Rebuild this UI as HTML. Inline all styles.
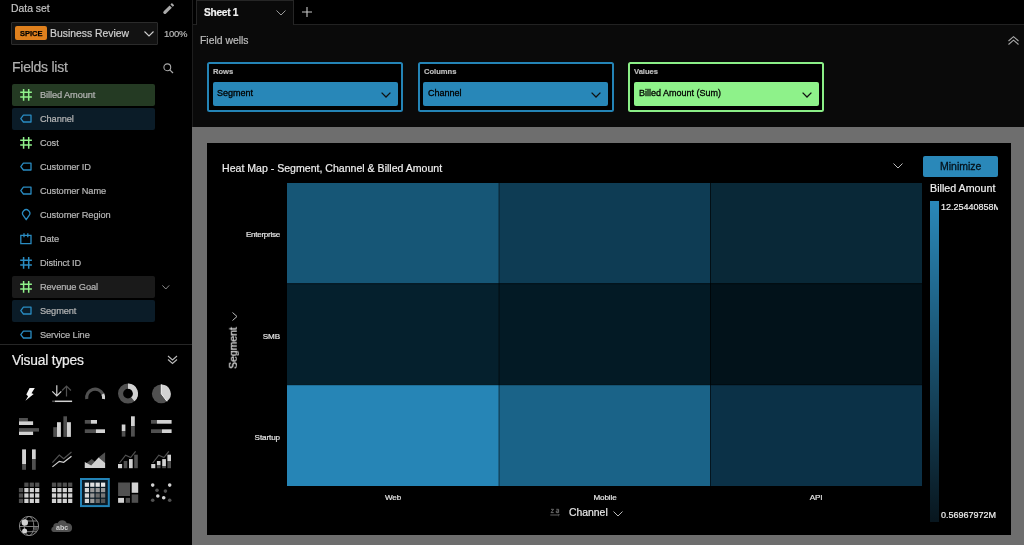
<!DOCTYPE html>
<html><head><meta charset="utf-8">
<style>
*{box-sizing:border-box;margin:0;padding:0}
html,body{width:1024px;height:545px;overflow:hidden;background:#000;font-family:"Liberation Sans",sans-serif}
.a{position:absolute}
.t{position:absolute;white-space:nowrap;line-height:1;will-change:transform;-webkit-text-stroke:0.2px currentColor}
svg{position:absolute;overflow:visible}
</style></head><body>
<!-- SIDEBAR -->
<div class="a" id="side" style="left:0;top:0;width:192px;height:545px;background:#000">
  <div class="t" style="left:11px;top:4.2px;font-size:10.4px;color:#c4c4c4">Data set</div>
  <!-- pencil -->
  <svg style="left:0;top:0" width="192" height="20" viewBox="0 0 192 20"><g transform="translate(164.05 13.2) rotate(-45)"><path d="M1.2 -1.65 H9.4 V1.65 H1.2 A1.65 1.65 0 0 1 1.2 -1.65 Z" fill="#a9a9a9"/><rect x="10.6" y="-1.65" width="2.1" height="3.3" rx="0.4" fill="#a9a9a9"/></g></svg>
  <div class="a" style="left:11px;top:22px;width:147px;height:23px;background:#121212;border:1px solid #2b2b2b;border-radius:1px"></div>
  <div class="a" style="left:15px;top:26px;width:32px;height:14px;background:#df801d;border-radius:2px"></div>
  <div class="t" style="left:19.5px;top:30px;font-size:7.5px;font-weight:700;color:#000;-webkit-text-stroke:0.25px #000">SPICE</div>
  <div class="t" style="left:50px;top:29px;font-size:10.4px;color:#cfcfcf">Business Review</div>
  <svg style="left:144px;top:31px" width="10" height="6" viewBox="0 0 10 6"><path d="M0.5 0.5 L5 5 L9.5 0.5" stroke="#cfcfcf" stroke-width="1.1" fill="none"/></svg>
  <div class="t" style="left:164.3px;top:29.2px;font-size:9.5px;letter-spacing:-0.3px;color:#b8b8b8">100%</div>

  <div class="t" style="left:11.9px;top:60.3px;font-size:14px;letter-spacing:-0.25px;color:#b0b0b0">Fields list</div>
  <svg style="left:163px;top:63px" width="11" height="11" viewBox="0 0 11 11"><circle cx="4.3" cy="4.3" r="3.4" stroke="#aaa" stroke-width="1.1" fill="none"/><path d="M6.8 6.8 L10 10" stroke="#aaa" stroke-width="1.2"/></svg>
  <div class="a" style="left:12px;top:84px;width:143px;height:22px;background:#243a23;border-radius:2px"></div>
<svg style="left:20px;top:89px" width="12" height="12" viewBox="0 0 12 12"><path d="M3.6 0 V11.7 M8.7 0 V11.7 M0.2 3.3 H11.9 M0.2 7.9 H11.9" stroke="#90f28b" stroke-width="1.5" fill="none"/></svg>
<div class="t" style="left:39.6px;top:90.5px;font-size:9.25px;letter-spacing:-0.1px;color:#b6b6b6">Billed Amount</div>
<div class="a" style="left:12px;top:108px;width:143px;height:22px;background:#0b1c28;border-radius:2px"></div>
<svg style="left:20px;top:113px" width="12" height="12" viewBox="0 0 12 12"><path d="M3.4 2.2 H11 V9 H3.4 L0.8 5.6 Z" stroke="#2a8cc2" stroke-width="1.3" fill="none" stroke-linejoin="round"/></svg>
<div class="t" style="left:39.6px;top:114.5px;font-size:9.25px;letter-spacing:-0.1px;color:#b6b6b6">Channel</div>
<svg style="left:20px;top:137px" width="12" height="12" viewBox="0 0 12 12"><path d="M3.6 0 V11.7 M8.7 0 V11.7 M0.2 3.3 H11.9 M0.2 7.9 H11.9" stroke="#90f28b" stroke-width="1.5" fill="none"/></svg>
<div class="t" style="left:39.6px;top:138.5px;font-size:9.25px;letter-spacing:-0.1px;color:#b6b6b6">Cost</div>
<svg style="left:20px;top:161px" width="12" height="12" viewBox="0 0 12 12"><path d="M3.4 2.2 H11 V9 H3.4 L0.8 5.6 Z" stroke="#2a8cc2" stroke-width="1.3" fill="none" stroke-linejoin="round"/></svg>
<div class="t" style="left:39.6px;top:162.5px;font-size:9.25px;letter-spacing:-0.1px;color:#b6b6b6">Customer ID</div>
<svg style="left:20px;top:185px" width="12" height="12" viewBox="0 0 12 12"><path d="M3.4 2.2 H11 V9 H3.4 L0.8 5.6 Z" stroke="#2a8cc2" stroke-width="1.3" fill="none" stroke-linejoin="round"/></svg>
<div class="t" style="left:39.6px;top:186.5px;font-size:9.25px;letter-spacing:-0.1px;color:#b6b6b6">Customer Name</div>
<svg style="left:20px;top:209px" width="12" height="12" viewBox="0 0 12 12"><path d="M6.2 10.7 L3.4 6.6 A3.62 3.62 0 1 1 9 6.6 Z" stroke="#2a8cc2" stroke-width="1.3" fill="none" stroke-linejoin="round"/></svg>
<div class="t" style="left:39.6px;top:210.5px;font-size:9.25px;letter-spacing:-0.1px;color:#b6b6b6">Customer Region</div>
<svg style="left:20px;top:233px" width="12" height="12" viewBox="0 0 12 12"><path d="M0.8 2.3 H11 V10.6 H0.8 Z M4 0.2 V4.2 M7.8 0.2 V4.2" stroke="#2a8cc2" stroke-width="1.3" fill="none"/></svg>
<div class="t" style="left:39.6px;top:234.5px;font-size:9.25px;letter-spacing:-0.1px;color:#b6b6b6">Date</div>
<svg style="left:20px;top:257px" width="12" height="12" viewBox="0 0 12 12"><path d="M3.6 0 V11.7 M8.7 0 V11.7 M0.2 3.3 H11.9 M0.2 7.9 H11.9" stroke="#2a8cc2" stroke-width="1.5" fill="none"/></svg>
<div class="t" style="left:39.6px;top:258.5px;font-size:9.25px;letter-spacing:-0.1px;color:#b6b6b6">Distinct ID</div>
<div class="a" style="left:12px;top:276px;width:143px;height:22px;background:#1a1a1a;border-radius:2px"></div>
<svg style="left:20px;top:281px" width="12" height="12" viewBox="0 0 12 12"><path d="M3.6 0 V11.7 M8.7 0 V11.7 M0.2 3.3 H11.9 M0.2 7.9 H11.9" stroke="#90f28b" stroke-width="1.5" fill="none"/></svg>
<div class="t" style="left:39.6px;top:282.5px;font-size:9.25px;letter-spacing:-0.1px;color:#b6b6b6">Revenue Goal</div>
<div class="a" style="left:12px;top:300px;width:143px;height:22px;background:#0b1c28;border-radius:2px"></div>
<svg style="left:20px;top:305px" width="12" height="12" viewBox="0 0 12 12"><path d="M3.4 2.2 H11 V9 H3.4 L0.8 5.6 Z" stroke="#2a8cc2" stroke-width="1.3" fill="none" stroke-linejoin="round"/></svg>
<div class="t" style="left:39.6px;top:306.5px;font-size:9.25px;letter-spacing:-0.1px;color:#b6b6b6">Segment</div>
<svg style="left:20px;top:329px" width="12" height="12" viewBox="0 0 12 12"><path d="M3.4 2.2 H11 V9 H3.4 L0.8 5.6 Z" stroke="#2a8cc2" stroke-width="1.3" fill="none" stroke-linejoin="round"/></svg>
<div class="t" style="left:39.6px;top:330.5px;font-size:9.25px;letter-spacing:-0.1px;color:#b6b6b6">Service Line</div>
<svg style="left:162px;top:284.8px" width="8" height="5" viewBox="0 0 8 5"><path d="M0.4 0.4 L3.8 4 L7.2 0.4" stroke="#9a9a9a" stroke-width="0.9" fill="none"/></svg>

  <div class="a" style="left:0;top:344px;width:192px;height:1px;background:#262626"></div>
  <div class="t" style="left:12.1px;top:354.2px;font-size:13.8px;letter-spacing:-0.2px;color:#ececec">Visual types</div>
  <svg style="left:167px;top:355px" width="11" height="10" viewBox="0 0 11 10"><path d="M1 1 L5.5 5 L10 1 M1 4.5 L5.5 8.5 L10 4.5" stroke="#bbb" stroke-width="1.1" fill="none"/></svg>
  <svg style="left:0;top:0" width="192" height="545" viewBox="0 0 192 545"><path d="M29.6 388 L34.8 388 L31.5 393.3 L33.7 394.1 L25.4 400.8 L28.1 396.2 L26.3 394.5 Z" fill="#f4f4f4"/><path d="M56.8 385.2 V396 M52.3 391.3 L56.8 395.9 L61.3 391.3" stroke="#d2d2d2" stroke-width="1.2" fill="none"/><path d="M66.5 396.4 V385.8 M62.1 390.5 L66.5 386 L70.9 390.5" stroke="#505050" stroke-width="1.2" fill="none"/><path d="M52.1 401.3 H55 " stroke="#505050" stroke-width="1.5"/><path d="M55 401.3 H72.1" stroke="#d2d2d2" stroke-width="1.5"/><path d="M86.73 399.08 A8.5 8.5 0 0 1 102.80 394.01" stroke="#505050" stroke-width="3.1" fill="none"/><path d="M102.80 394.01 A8.5 8.5 0 0 1 103.47 399.08" stroke="#d2d2d2" stroke-width="3.1" fill="none"/><circle cx="128" cy="393.6" r="7.45" stroke="#505050" stroke-width="5.1" fill="none"/><path d="M128.00 386.15 A7.45 7.45 0 0 1 132.79 399.31" stroke="#d2d2d2" stroke-width="5.1" fill="none"/><circle cx="161.3" cy="393.8" r="9.4" fill="#505050"/><path d="M161.3 393.8 L161.30 384.40 A9.4 9.4 0 0 1 166.96 401.31 Z" fill="#d2d2d2"/><path d="M161.30 384.40 L161.3 393.8 L166.96 401.31" stroke="#f4f4f4" stroke-width="1" fill="none"/><rect x="19" y="418" width="8.90" height="3.30" fill="#505050"/><rect x="19" y="421.3" width="14.10" height="3.70" fill="#d2d2d2"/><rect x="19" y="428.1" width="20.00" height="3.50" fill="#505050"/><rect x="19" y="431.6" width="14.10" height="3.40" fill="#d2d2d2"/><rect x="53.25" y="427.2" width="3.75" height="9.70" fill="#505050"/><rect x="57" y="422.2" width="3.90" height="14.70" fill="#d2d2d2"/><rect x="63.4" y="416.3" width="3.60" height="20.60" fill="#505050"/><rect x="67" y="422.2" width="3.90" height="14.70" fill="#d2d2d2"/><rect x="84.8" y="420" width="6.20" height="3.70" fill="#505050"/><rect x="91" y="420" width="6.00" height="3.70" fill="#d2d2d2"/><rect x="84.8" y="429.3" width="11.10" height="3.70" fill="#505050"/><rect x="95.9" y="429.3" width="9.10" height="3.70" fill="#d2d2d2"/><rect x="121.75" y="424.5" width="3.65" height="6.50" fill="#d2d2d2"/><rect x="121.75" y="431" width="3.65" height="5.60" fill="#505050"/><rect x="131" y="416.3" width="3.80" height="9.80" fill="#d2d2d2"/><rect x="131" y="426.1" width="3.80" height="10.50" fill="#505050"/><rect x="151" y="420" width="5.90" height="3.70" fill="#505050"/><rect x="156.9" y="420" width="14.70" height="3.70" fill="#d2d2d2"/><rect x="151" y="429.3" width="11.00" height="3.70" fill="#505050"/><rect x="162" y="429.3" width="9.60" height="3.70" fill="#d2d2d2"/><rect x="22.1" y="449.4" width="3.90" height="14.60" fill="#d2d2d2"/><rect x="22.1" y="464" width="3.90" height="5.80" fill="#505050"/><rect x="32" y="449.4" width="3.75" height="9.60" fill="#d2d2d2"/><rect x="32" y="459" width="3.75" height="10.80" fill="#505050"/><path d="M52.4 462.6 L59.3 455.1 L63.7 458.6 L71.5 452" stroke="#505050" stroke-width="1.2" fill="none"/><path d="M52.4 466.9 L59.3 461.4 L63.7 462.3 L71.5 456.25" stroke="#d2d2d2" stroke-width="1.2" fill="none"/><path d="M84.8 464.5 L91.7 459 L96 462.5 L98.5 457.6 L105.1 452.3 L105.1 467.9 L84.8 467.9 Z" fill="#505050"/><path d="M84.8 462 L91.2 465.4 L98.5 457.6 L105.1 463 L105.1 467.9 L84.8 467.9 Z" fill="#d2d2d2"/><rect x="118" y="464" width="4.10" height="4.20" fill="#d2d2d2"/><rect x="123.7" y="461" width="3.60" height="7.20" fill="#505050"/><rect x="129" y="459.1" width="3.70" height="9.10" fill="#d2d2d2"/><rect x="134.2" y="454.7" width="3.60" height="13.50" fill="#505050"/><path d="M119.5 463 L125.6 455.2 L130.7 457.6 L135.6 451.3" stroke="#505050" stroke-width="1.2" fill="none"/><rect x="151.2" y="464" width="4.10" height="4.20" fill="#d2d2d2"/><rect x="156.9" y="461" width="3.60" height="4.00" fill="#d2d2d2"/><rect x="156.9" y="465" width="3.60" height="3.20" fill="#505050"/><rect x="162.2" y="459.1" width="3.70" height="6.90" fill="#d2d2d2"/><rect x="162.2" y="466" width="3.70" height="2.20" fill="#505050"/><rect x="167.39999999999998" y="454.7" width="3.60" height="6.30" fill="#d2d2d2"/><rect x="167.39999999999998" y="461" width="3.60" height="7.20" fill="#505050"/><path d="M152.7 463 L158.8 455.2 L163.89999999999998 457.6 L168.8 451.3" stroke="#505050" stroke-width="1.2" fill="none"/><rect x="24.3" y="482.6" width="4.20" height="4.20" fill="#505050"/><rect x="29.7" y="482.6" width="4.20" height="4.20" fill="#505050"/><rect x="35.1" y="482.6" width="4.20" height="4.20" fill="#505050"/><rect x="18.9" y="488" width="4.20" height="4.20" fill="#505050"/><rect x="24.3" y="488" width="4.20" height="4.20" fill="#d2d2d2"/><rect x="29.7" y="488" width="4.20" height="4.20" fill="#d2d2d2"/><rect x="35.1" y="488" width="4.20" height="4.20" fill="#d2d2d2"/><rect x="18.9" y="493.4" width="4.20" height="4.20" fill="#505050"/><rect x="24.3" y="493.4" width="4.20" height="4.20" fill="#d2d2d2"/><rect x="29.7" y="493.4" width="4.20" height="4.20" fill="#d2d2d2"/><rect x="35.1" y="493.4" width="4.20" height="4.20" fill="#d2d2d2"/><rect x="18.9" y="498.8" width="4.20" height="4.20" fill="#505050"/><rect x="24.3" y="498.8" width="4.20" height="4.20" fill="#d2d2d2"/><rect x="29.7" y="498.8" width="4.20" height="4.20" fill="#d2d2d2"/><rect x="35.1" y="498.8" width="4.20" height="4.20" fill="#d2d2d2"/><rect x="51.9" y="482.6" width="4.20" height="4.20" fill="#505050"/><rect x="57.3" y="482.6" width="4.20" height="4.20" fill="#505050"/><rect x="62.7" y="482.6" width="4.20" height="4.20" fill="#505050"/><rect x="68.1" y="482.6" width="4.20" height="4.20" fill="#505050"/><rect x="51.9" y="488" width="4.20" height="4.20" fill="#d2d2d2"/><rect x="57.3" y="488" width="4.20" height="4.20" fill="#d2d2d2"/><rect x="62.7" y="488" width="4.20" height="4.20" fill="#d2d2d2"/><rect x="68.1" y="488" width="4.20" height="4.20" fill="#d2d2d2"/><rect x="51.9" y="493.4" width="4.20" height="4.20" fill="#d2d2d2"/><rect x="57.3" y="493.4" width="4.20" height="4.20" fill="#d2d2d2"/><rect x="62.7" y="493.4" width="4.20" height="4.20" fill="#d2d2d2"/><rect x="68.1" y="493.4" width="4.20" height="4.20" fill="#d2d2d2"/><rect x="51.9" y="498.8" width="4.20" height="4.20" fill="#d2d2d2"/><rect x="57.3" y="498.8" width="4.20" height="4.20" fill="#d2d2d2"/><rect x="62.7" y="498.8" width="4.20" height="4.20" fill="#d2d2d2"/><rect x="68.1" y="498.8" width="4.20" height="4.20" fill="#d2d2d2"/><rect x="81" y="479" width="27.8" height="27.1" fill="#0b1a24" stroke="#2384b8" stroke-width="2"/><rect x="84.8" y="482.6" width="4.20" height="4.20" fill="#e0e0e0"/><rect x="90.2" y="482.6" width="4.20" height="4.20" fill="#e0e0e0"/><rect x="95.6" y="482.6" width="4.20" height="4.20" fill="#e0e0e0"/><rect x="101" y="482.6" width="4.20" height="4.20" fill="#e6e6e6"/><rect x="84.8" y="488" width="4.20" height="4.20" fill="#d8d8d8"/><rect x="90.2" y="488" width="4.20" height="4.20" fill="#999"/><rect x="95.6" y="488" width="4.20" height="4.20" fill="#9a9a9a"/><rect x="101" y="488" width="4.20" height="4.20" fill="#999"/><rect x="84.8" y="493.4" width="4.20" height="4.20" fill="#d8d8d8"/><rect x="90.2" y="493.4" width="4.20" height="4.20" fill="#999"/><rect x="95.6" y="493.4" width="4.20" height="4.20" fill="#6a6a6a"/><rect x="101" y="493.4" width="4.20" height="4.20" fill="#777"/><rect x="84.8" y="498.8" width="4.20" height="4.20" fill="#d8d8d8"/><rect x="90.2" y="498.8" width="4.20" height="4.20" fill="#999"/><rect x="95.6" y="498.8" width="4.20" height="4.20" fill="#6a6a6a"/><rect x="101" y="498.8" width="4.20" height="4.20" fill="#555"/><rect x="118.1" y="482.5" width="11.90" height="13.50" fill="#505050"/><rect x="131.7" y="482.5" width="6.50" height="10.30" fill="#d2d2d2"/><rect x="118.1" y="497.9" width="5.90" height="4.90" fill="#d2d2d2"/><rect x="125.7" y="497.9" width="4.30" height="4.90" fill="#505050"/><rect x="131.7" y="494.4" width="6.50" height="8.40" fill="#505050"/><circle cx="152.7" cy="485.1" r="1.8" fill="#d2d2d2"/><circle cx="169.7" cy="485.1" r="1.8" fill="#d2d2d2"/><circle cx="157" cy="490.2" r="1.8" fill="#505050"/><circle cx="165.4" cy="491.1" r="1.8" fill="#505050"/><circle cx="157.8" cy="496" r="1.8" fill="#d2d2d2"/><circle cx="163.7" cy="497.8" r="1.8" fill="#d2d2d2"/><circle cx="152.7" cy="500.3" r="1.8" fill="#505050"/><circle cx="169.7" cy="500.3" r="1.8" fill="#505050"/><circle cx="29" cy="526" r="9.6" stroke="#8a8a8a" stroke-width="1" fill="none"/><path d="M19.6 526.5 H38.4 M21.2 521 H36.8 M21.2 531.7 H36.8" stroke="#8a8a8a" stroke-width="0.9" fill="none"/><ellipse cx="29" cy="526" rx="4.8" ry="9.6" stroke="#8a8a8a" stroke-width="0.9" fill="none"/><rect x="34" y="527" width="3.6" height="3.6" fill="#4a4a4a"/><circle cx="24.8" cy="522.5" r="3.2" fill="#d2d2d2"/><circle cx="24.6" cy="531" r="2.5" fill="#d2d2d2"/><path d="M53.5 531.9 A2.6 2.6 0 0 1 53.3 526.8 A3.4 3.4 0 0 1 57.6 523.2 A5 5 0 0 1 66.8 523.3 A4.3 4.3 0 0 1 72.1 528 A4 4 0 0 1 68.1 531.9 Z" fill="#505050"/><text x="62.1" y="529.8" text-anchor="middle" font-family="Liberation Sans" font-weight="700" font-size="7" fill="#d0d0d0">abc</text></svg>
</div>
<div class="a" style="left:192px;top:0;width:1px;height:127px;background:#1e1e1e"></div>

<!-- MAIN TOP -->
<div class="a" style="left:193px;top:0;width:831px;height:24px;background:#000"></div>
<div class="a" style="left:193px;top:24px;width:831px;height:103px;background:#0a0a0a;border-top:1px solid #222"></div>
<div class="a" style="left:196px;top:0;width:98px;height:25px;background:#0a0a0a;border:1px solid #262626;border-bottom:none"></div>
<div class="t" style="left:204.3px;top:7.6px;font-size:10.1px;letter-spacing:-0.25px;font-weight:700;color:#f2f2f2">Sheet 1</div>
<svg style="left:275.5px;top:10px" width="10" height="6" viewBox="0 0 10 6"><path d="M0.5 0.5 L5 5 L9.5 0.5" stroke="#9a9a9a" stroke-width="1" fill="none"/></svg>
<svg style="left:302px;top:7px" width="10" height="10" viewBox="0 0 10 10"><path d="M5 0 V10 M0 5 H10" stroke="#c8c8c8" stroke-width="1.1"/></svg>
<div class="t" style="left:200px;top:35.8px;font-size:10.4px;color:#bdbdbd">Field wells</div>
<svg style="left:1008px;top:36px" width="11" height="9" viewBox="0 0 11 9"><path d="M0.5 5 L5.5 0.7 L10.5 5 M0.5 8.5 L5.5 4.2 L10.5 8.5" stroke="#aaa" stroke-width="1.1" fill="none"/></svg>

<!-- wells -->
<div class="a" style="left:207px;top:62px;width:196px;height:50px;background:#000;border:2px solid #2484b6;border-radius:2.5px"></div>
<div class="t" style="left:213px;top:68px;font-size:7.6px;font-weight:700;color:#bcbcbc">Rows</div>
<div class="a" style="left:213px;top:82px;width:185px;height:24px;background:#2887b8;border-radius:2px"></div>
<div class="t" style="left:217.4px;top:88.7px;font-size:9px;color:#000;-webkit-text-stroke:0.3px #000">Segment</div>
<svg style="left:381px;top:92.2px" width="10" height="6" viewBox="0 0 10 6"><path d="M0.6 0.6 L5 5 L9.4 0.6" stroke="#111" stroke-width="1.3" fill="none"/></svg>

<div class="a" style="left:418px;top:62px;width:196px;height:50px;background:#000;border:2px solid #2484b6;border-radius:2.5px"></div>
<div class="t" style="left:423.5px;top:68px;font-size:7.6px;font-weight:700;color:#bcbcbc">Columns</div>
<div class="a" style="left:423px;top:82px;width:185px;height:24px;background:#2887b8;border-radius:2px"></div>
<div class="t" style="left:428px;top:88.7px;font-size:9px;color:#000;-webkit-text-stroke:0.3px #000">Channel</div>
<svg style="left:591px;top:92.2px" width="10" height="6" viewBox="0 0 10 6"><path d="M0.6 0.6 L5 5 L9.4 0.6" stroke="#111" stroke-width="1.3" fill="none"/></svg>

<div class="a" style="left:628px;top:62px;width:196px;height:50px;background:#000;border:2px solid #8bee87;border-radius:2.5px"></div>
<div class="t" style="left:634px;top:68px;font-size:7.6px;font-weight:700;color:#bcbcbc">Values</div>
<div class="a" style="left:634px;top:82px;width:185px;height:24px;background:#8ef28a;border-radius:2px"></div>
<div class="t" style="left:638.5px;top:88.7px;font-size:9px;color:#000;-webkit-text-stroke:0.3px #000">Billed Amount (Sum)</div>
<svg style="left:802px;top:92.2px" width="10" height="6" viewBox="0 0 10 6"><path d="M0.6 0.6 L5 5 L9.4 0.6" stroke="#111" stroke-width="1.3" fill="none"/></svg>

<!-- CANVAS -->
<div class="a" style="left:192px;top:127px;width:832px;height:418px;background:#6e6e6e"></div>
<div class="a" style="left:207px;top:143px;width:804px;height:392px;background:#000"></div>
<div class="t" style="left:221.5px;top:163.3px;font-size:10.57px;color:#eeeeee">Heat Map - Segment, Channel &amp; Billed Amount</div>
<svg style="left:893px;top:163px" width="10" height="6" viewBox="0 0 10 6"><path d="M0.5 0.5 L5 5 L9.5 0.5" stroke="#bbb" stroke-width="1" fill="none"/></svg>
<div class="a" style="left:922.5px;top:156px;width:75.5px;height:21px;background:#2a88b9;border-radius:2px"></div>
<div class="t" style="left:939.5px;top:161px;font-size:10.5px;color:#05111a;-webkit-text-stroke:0.3px #05111a">Minimize</div>
<div class="t" style="left:930.4px;top:183px;font-size:10.7px;color:#eeeeee">Billed Amount</div>
<div class="a" style="left:930px;top:201px;width:9px;height:321px;background:linear-gradient(#2a88b9,#08161e)"></div>
<div class="a" style="left:941px;top:202px;width:57px;height:12px;overflow:hidden"><div class="t" style="left:0;top:1px;font-size:9px;color:#eee">12.25440858M</div></div>
<div class="t" style="left:940.7px;top:510.5px;font-size:9px;color:#eee">0.56967972M</div>

<!-- grid -->
<svg style="left:0;top:0" width="1024" height="545" viewBox="0 0 1024 545" shape-rendering="geometricPrecision"><rect x="287" y="183" width="212.00" height="100.70" fill="#165676"/><rect x="499" y="183" width="211.50" height="100.70" fill="#0e3c54"/><rect x="710.5" y="183" width="211.50" height="100.70" fill="#092837"/><rect x="287" y="283.7" width="212.00" height="101.10" fill="#05202d"/><rect x="499" y="283.7" width="211.50" height="101.10" fill="#031a25"/><rect x="710.5" y="283.7" width="211.50" height="101.10" fill="#02121a"/><rect x="287" y="384.8" width="212.00" height="101.20" fill="#2685b6"/><rect x="499" y="384.8" width="211.50" height="101.20" fill="#1a6388"/><rect x="710.5" y="384.8" width="211.50" height="101.20" fill="#0b3147"/><path d="M499 183 V486 M710.5 183 V486 M287 283.7 H922 M287 384.8 H922" stroke="rgba(0,0,0,0.55)" stroke-width="1"/></svg>
<div class="t" style="left:220px;top:230.8px;width:60px;text-align:right;font-size:8.1px;letter-spacing:-0.28px;color:#e6e6e6">Enterprise</div>
<div class="t" style="left:220px;top:332.8px;width:60px;text-align:right;font-size:8.1px;letter-spacing:-0.1px;color:#e6e6e6">SMB</div>
<div class="t" style="left:220px;top:433.8px;width:60px;text-align:right;font-size:8.1px;letter-spacing:-0.1px;color:#e6e6e6">Startup</div>
<div class="t" style="left:343px;top:493.8px;width:100px;text-align:center;font-size:8.1px;letter-spacing:-0.1px;color:#e6e6e6">Web</div>
<div class="t" style="left:555px;top:493.8px;width:100px;text-align:center;font-size:8.1px;letter-spacing:-0.1px;color:#e6e6e6">Mobile</div>
<div class="t" style="left:766px;top:493.8px;width:100px;text-align:center;font-size:8.1px;letter-spacing:-0.1px;color:#e6e6e6">API</div>
<div class="t" style="left:233.5px;top:348px;font-size:10.4px;color:#e6e6e6;transform:translate(-50%,-50%) rotate(-90deg)">Segment</div>
<svg style="left:231.5px;top:312px" width="6" height="9" viewBox="0 0 6 9"><path d="M0.5 0.5 L5 4.5 L0.5 8.5" stroke="#bbb" stroke-width="1" fill="none"/></svg>
<div class="t" style="left:569px;top:508px;font-size:10.4px;color:#e6e6e6">Channel</div>
<svg style="left:613px;top:510.5px" width="10" height="6" viewBox="0 0 10 6"><path d="M0.5 0.5 L5 5 L9.5 0.5" stroke="#bbb" stroke-width="1" fill="none"/></svg>
<svg style="left:549px;top:507px" width="12" height="10" viewBox="0 0 12 10"><path d="M2 2.3 H4.6 L2 5.6 H4.7 M7.3 2.3 H9.6 V5.6 H7.3 V4 H9.6" stroke="#6a6a6a" stroke-width="1" fill="none"/><path d="M1.3 8 H10" stroke="#5a5a5a" stroke-width="1.1"/><path d="M9.3 6.9 L10.4 8 L9.3 9" stroke="#5a5a5a" stroke-width="1" fill="none"/></svg>
</body></html>
